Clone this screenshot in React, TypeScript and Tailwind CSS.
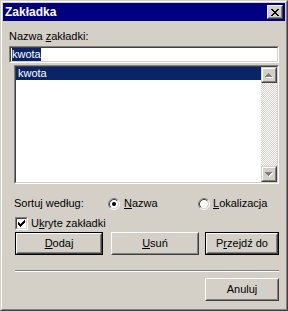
import type { ReactNode } from "react"

function Raised({ children, className = "", isDefault = false }: { children: ReactNode; className?: string; isDefault?: boolean }) {
  if (isDefault) {
    return (
      <div className={`border border-black bg-[#d4d0c8] ${className}`}>
        <div className="h-full border border-t-white border-l-white border-b-[#404040] border-r-[#404040]">
          <div className="h-full flex items-center justify-center border border-t-[#d4d0c8] border-l-[#d4d0c8] border-b-[#808080] border-r-[#808080]">
            {children}
          </div>
        </div>
      </div>
    )
  }
  return (
    <div className={`border border-t-white border-l-white border-b-[#404040] border-r-[#404040] bg-[#d4d0c8] ${className}`}>
      <div className="h-full flex items-center justify-center border border-t-[#d4d0c8] border-l-[#d4d0c8] border-b-[#808080] border-r-[#808080]">
        {children}
      </div>
    </div>
  )
}

function Sunken({ children, className = "", inner = "" }: { children: ReactNode; className?: string; inner?: string }) {
  return (
    <div className={`border border-t-[#808080] border-l-[#808080] border-b-white border-r-white ${className}`}>
      <div className={`h-full border border-t-[#404040] border-l-[#404040] border-b-[#d4d0c8] border-r-[#d4d0c8] bg-white ${inner}`}>
        {children}
      </div>
    </div>
  )
}

function CloseGlyph() {
  const rows = [
    [[0, 2], [6, 2]],
    [[1, 2], [5, 2]],
    [[2, 4]],
    [[3, 2]],
    [[2, 4]],
    [[1, 2], [5, 2]],
    [[0, 2], [6, 2]],
  ]
  return (
    <svg width="8" height="7" viewBox="0 0 8 7" shapeRendering="crispEdges">
      {rows.map((segs, y) => segs.map(([x, w]) => <rect key={`${y}-${x}`} x={x} y={y} width={w} height={1} fill="#000" />))}
    </svg>
  )
}

function Arrow({ down = false }: { down?: boolean }) {
  const rows = [
    [3, 1],
    [2, 3],
    [1, 5],
    [0, 7],
  ]
  const r = down ? [...rows].reverse() : rows
  return (
    <svg width="8" height="5" viewBox="0 0 8 5" shapeRendering="crispEdges">
      {r.map(([x, w], y) => <rect key={`s${y}`} x={x + 1} y={y + 1} width={w} height={1} fill="#fff" />)}
      {r.map(([x, w], y) => <rect key={`g${y}`} x={x} y={y} width={w} height={1} fill="#808080" />)}
    </svg>
  )
}

function Radio({ checked }: { checked?: boolean }) {
  return (
    <svg width="12" height="12" viewBox="0 0 12 12" className="shrink-0">
      <circle cx="6" cy="6" r="4.2" fill="#fff" />
      <path d="M2.11 9.89 A5.5 5.5 0 0 1 9.89 2.11" fill="none" stroke="#808080" />
      <path d="M9.89 2.11 A5.5 5.5 0 0 1 2.11 9.89" fill="none" stroke="#fff" />
      <path d="M2.82 9.18 A4.5 4.5 0 0 1 9.18 2.82" fill="none" stroke="#404040" />
      <path d="M9.18 2.82 A4.5 4.5 0 0 1 2.82 9.18" fill="none" stroke="#d4d0c8" />
      {checked && <circle cx="6" cy="6" r="2" fill="#000" />}
    </svg>
  )
}

function Check() {
  const rows = [
    [[6, 1]],
    [[5, 2]],
    [[0, 1], [4, 3]],
    [[0, 2], [3, 3]],
    [[0, 5]],
    [[1, 3]],
    [[2, 1]],
  ]
  return (
    <svg width="7" height="7" viewBox="0 0 7 7" shapeRendering="crispEdges">
      {rows.map((segs, y) => segs.map(([x, w]) => <rect key={`${y}-${x}`} x={x} y={y} width={w} height={1} fill="#000" />))}
    </svg>
  )
}

export default function App() {
  return (
    <div className="w-[288px] h-[311px] bg-[#d4d0c8] text-black text-[11px] leading-[13px] font-['Liberation_Sans',Arial,sans-serif] border border-t-[#d4d0c8] border-l-[#d4d0c8] border-b-[#404040] border-r-[#404040]">
      <div className="h-full border border-t-white border-l-white border-b-[#808080] border-r-[#808080] p-[1px] flex flex-col">
        <div className="h-[18px] bg-[#000080] flex items-center justify-between pl-[2px] pr-[2px]">
          <span className="text-white font-bold text-[12px]">Zakładka</span>
          <Raised className="w-[16px] h-[14px]">
            <CloseGlyph />
          </Raised>
        </div>

        <div className="flex flex-col px-[6px]">
          <div className="mt-[9px] h-[13px]">
            Nazwa <u>z</u>akładki:
          </div>
          <Sunken className="mt-[3px] h-[17px]" inner="pl-[1px]">
            <span className="bg-[#0a246a] text-white inline-block h-[13px]">kwota</span>
          </Sunken>
          <Sunken className="mt-[2px] ml-[5px] h-[119px]" inner="flex">
            <div className="flex-1">
              <div className="h-[13px] bg-[#0a246a] text-white pl-[2px]">kwota</div>
            </div>
            <div className="w-[16px] flex flex-col bg-[image:repeating-conic-gradient(#d4d0c8_0%_25%,#fff_0%_50%)] bg-size-[2px_2px]">
              <div className="h-[16px] border border-t-[#d4d0c8] border-l-[#d4d0c8] border-b-[#404040] border-r-[#404040]">
                <div className="h-full flex items-center justify-center bg-[#d4d0c8] border border-t-white border-l-white border-b-[#808080] border-r-[#808080]">
                  <Arrow />
                </div>
              </div>
              <div className="flex-1" />
              <div className="h-[16px] border border-t-[#d4d0c8] border-l-[#d4d0c8] border-b-[#404040] border-r-[#404040]">
                <div className="h-full flex items-center justify-center bg-[#d4d0c8] border border-t-white border-l-white border-b-[#808080] border-r-[#808080]">
                  <Arrow down />
                </div>
              </div>
            </div>
          </Sunken>

          <div className="mt-[13px] ml-[5px] h-[13px] flex items-center">
            <span className="w-[94px]">Sortuj według:</span>
            <div className="w-[90px] flex items-center gap-[4px]">
              <Radio checked />
              <span>
                <u>N</u>azwa
              </span>
            </div>
            <div className="flex items-center gap-[3px]">
              <Radio />
              <span>
                <u>L</u>okalizacja
              </span>
            </div>
          </div>

          <div className="mt-[6px] ml-[6px] h-[14px] flex items-center gap-[3px]">
            <Sunken className="w-[13px] h-[13px]" inner="flex items-center justify-center">
              <Check />
            </Sunken>
            <span>
              U<u>k</u>ryte zakładki
            </span>
          </div>

          <div className="mt-[2px] ml-[6px] h-[23px] flex">
            <Raised isDefault className="w-[88px] h-[23px]">
              <span>
                <u>D</u>odaj
              </span>
            </Raised>
            <Raised className="ml-[8px] w-[88px] h-[23px]">
              <span>
                <u>U</u>suń
              </span>
            </Raised>
            <Raised isDefault className="ml-[6px] w-[74px] h-[23px]">
              <span>
                P<u>r</u>zejdź do
              </span>
            </Raised>
          </div>

          <div className="mt-[15px] ml-[6px] border-t border-t-[#808080] border-b border-b-white" />

          <Raised className="mt-[6px] self-end w-[74px] h-[23px]">
            <span>Anuluj</span>
          </Raised>
        </div>
      </div>
    </div>
  )
}
